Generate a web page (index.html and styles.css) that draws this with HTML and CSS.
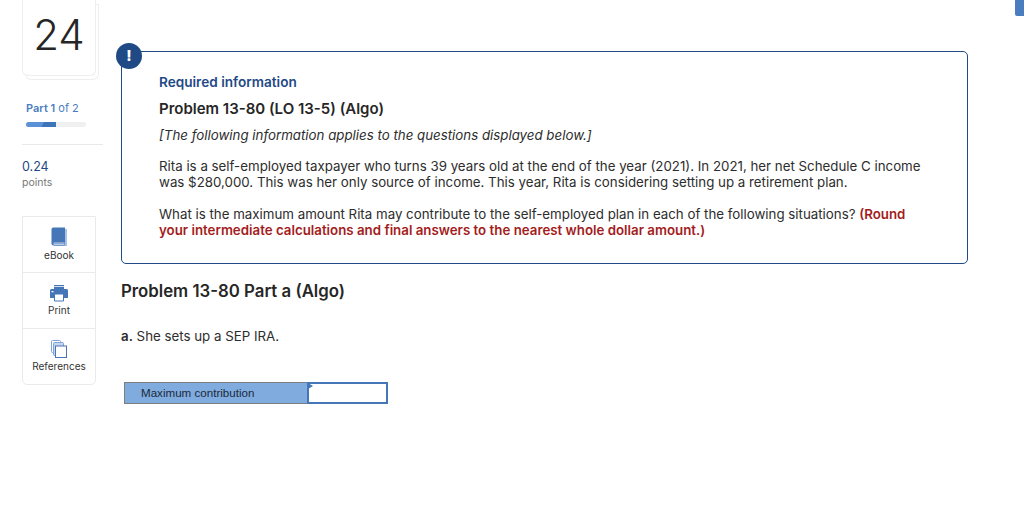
FILE: index.html
```html
<!DOCTYPE html>
<html lang="en">
<head>
  <meta charset="UTF-8" />
  <title>Problem 13-80 Part a (Algo)</title>
  <link rel="stylesheet" href="styles.css">
</head>
<body>
  <div class="corner-tab"></div>
  <div class="page">
    <aside class="sidebar">
      <div class="number-card"><div class="number">24</div></div>
      <div class="part-info">
        <div class="part-label"><b>Part 1</b> of 2</div>
        <div class="progress"><div class="progress-fill"></div></div>
      </div>
      <div class="points">
        <div class="points-value">0.24</div>
        <div class="points-label">points</div>
      </div>
      <div class="tools">
        <div class="tool">
          <svg width="20" height="24" viewBox="0 0 20 24">
            <path d="M5 5h13v17H5z" fill="#a9c3e6"/>
            <path d="M2.500 5.500C2.500 4.400 3.400 3.500 4.500 3.500H16V18.500H4.500C3.500 18.500 2.500 19 2.500 20z" fill="#4476b8"/>
            <path d="M2.500 19.500C2.500 18.500 3.500 18 4.500 18H16V21.500H4.500C3.400 21.500 2.500 20.600 2.500 19.500z" fill="#4476b8"/>
            <path d="M4.500 19H15.500M4.500 20.400H15.500" stroke="#fff" stroke-width=".7"/>
          </svg>
          <span>eBook</span>
        </div>
        <div class="tool">
          <svg width="20" height="20" viewBox="0 0 20 20">
            <path d="M5 2h10v1.300H5zM5 4h10v2H5z" fill="#4476b8"/>
            <path d="M1 7.500C1 6.700 1.700 6 2.500 6h15c.8 0 1.500.7 1.500 1.500V15H1z" fill="#4476b8"/>
            <path d="M2.500 8h2v1.300h-2z" fill="#fff"/>
            <path d="M5.500 11h9v7h-9z" fill="#fff" stroke="#4476b8" stroke-width="1"/>
          </svg>
          <span>Print</span>
        </div>
        <div class="tool">
          <svg width="20" height="20" viewBox="0 0 20 20">
            <rect x="2.500" y="1.500" width="9" height="12" rx="1" fill="#fff" stroke="#7fa3d6"/>
            <rect x="4.500" y="3.500" width="10" height="13" rx="1" fill="#c6d6ee" stroke="#7fa3d6"/>
            <rect x="6.500" y="7" width="11" height="11.500" fill="#fff" stroke="#4476b8"/>
          </svg>
          <span>References</span>
        </div>
      </div>
    </aside>

    <main class="content">
      <section class="notice">
        <div class="notice-badge">!</div>
        <h3 class="notice-title">Required information</h3>
        <h2 class="notice-problem">Problem 13-80 (LO 13-5) (Algo)</h2>
        <p class="notice-lead">[The following information applies to the questions displayed below.]</p>
        <p class="notice-text">Rita is a self-employed taxpayer who turns 39 years old at the end of the year (2021). In 2021, her net Schedule C income was $280,000. This was her only source of income. This year, Rita is considering setting up a retirement plan.</p>
        <p class="notice-text">What is the maximum amount Rita may contribute to the self-employed plan in each of the following situations? <strong class="warn">(Round your intermediate calculations and final answers to the nearest whole dollar amount.)</strong></p>
      </section>

      <h2 class="part-title">Problem 13-80 Part a (Algo)</h2>
      <p class="question"><b>a.</b> She sets up a SEP IRA.</p>

      <div class="answer-table">
        <div class="answer-label">Maximum contribution</div>
        <div class="answer-cell"></div>
      </div>
    </main>
  </div>
</body>
</html>
```

FILE: styles.css
```css
body {
  margin: 0;
  font-family: "Inter", "Open Sans", sans-serif;
  color: #2d2d2d;
  background: #fff;
}
.corner-tab {
  position: absolute;
  top: 0;
  right: 0;
  width: 9px;
  height: 16px;
  background: #4a7cc0;
  border-radius: 0 0 0 2px;
}
.page {
  display: flex;
  align-items: flex-start;
  padding-left: 22px;
}
.sidebar {
  width: 81px;
  flex: none;
}
.number-card {
  width: 74px;
  height: 76px;
  box-sizing: border-box;
  border: 1px solid #eee;
  border-top: 0;
  border-radius: 0 0 6px 6px;
  box-shadow: 3px 4px 0 -1px #fff, 3px 4px 0 0 #eee;
  display: flex;
  justify-content: center;
  padding-top: 13px;
}
.number {
  font-size: 42px;
  font-weight: 300;
  line-height: 44px;
  color: #262626;
}
.part-info {
  padding: 25px 0 17px 4px;
  border-bottom: 1px solid #e9e9e9;
}
.part-label {
  font-size: 11px;
  line-height: 14px;
  color: #4a7cc0;
}
.part-label b {
  font-weight: 600;
}
.progress {
  width: 60px;
  height: 5px;
  margin-top: 7px;
  background: #f0f0f0;
  border-radius: 3px;
  overflow: hidden;
}
.progress-fill {
  width: 30px;
  height: 100%;
  background: linear-gradient(115deg, #5b91d6 55%, #3e74b8 55%);
}
.points {
  padding-top: 14px;
}
.points-value {
  font-size: 12.500px;
  line-height: 16px;
  color: #1f4a85;
}
.points-label {
  font-size: 10.500px;
  line-height: 16px;
  color: #777;
}
.tools {
  width: 74px;
  box-sizing: border-box;
  margin-top: 25px;
  border: 1px solid #eaeaea;
  border-radius: 0 0 5px 5px;
}
.tool {
  height: 56px;
  box-sizing: border-box;
  display: flex;
  flex-direction: column;
  align-items: center;
  justify-content: flex-end;
  padding-bottom: 11px;
  font-size: 10px;
  line-height: 13px;
  color: #333;
}
.tool:first-child {
  height: 55px;
  padding-bottom: 10px;
}
.tool + .tool {
  border-top: 1px solid #eaeaea;
}
.tool svg {
  margin-bottom: 1px;
}
.content {
  width: 847px;
  margin: 51px 0 0 18px;
}
.notice {
  position: relative;
  height: 213px;
  box-sizing: border-box;
  padding: 22px 37px 0;
  border: 1px solid #1f4a85;
  border-radius: 5px;
}
.notice-badge {
  position: absolute;
  left: -6px;
  top: -9px;
  width: 26px;
  height: 26px;
  border-radius: 50%;
  background: #1f4a85;
  color: #fff;
  font-size: 15px;
  font-weight: 800;
  line-height: 26px;
  text-align: center;
}
.notice-title {
  margin: 0;
  font-size: 13.600px;
  line-height: 17px;
  font-weight: 600;
  color: #1f4a85;
}
.notice-problem {
  margin: 9px 0 0;
  font-size: 15px;
  line-height: 18px;
  font-weight: 600;
  color: #262626;
}
.notice-lead {
  margin: 8px 0 0;
  font-size: 13.300px;
  line-height: 18px;
  font-style: italic;
}
.notice-text {
  margin: 16px 0 0;
  font-size: 13.300px;
  line-height: 16px;
  width: 765px;
}
.notice-lead + .notice-text {
  margin-top: 14px;
}
.warn {
  font-weight: 600;
  color: #a31d1d;
}
.part-title {
  margin: 17px 0 0;
  font-size: 16.800px;
  line-height: 20px;
  font-weight: 600;
  color: #262626;
}
.question {
  margin: 26px 0 0;
  font-size: 13.300px;
  line-height: 18px;
}
.question b {
  font-weight: 600;
}
.answer-table {
  display: flex;
  width: 264px;
  height: 22px;
  margin: 37px 0 0 3px;
}
.answer-label {
  flex: 1;
  box-sizing: border-box;
  padding-left: 16px;
  background: #7fabdf;
  border: 1px solid #7d7d7d;
  border-right: 0;
  font-family: "Liberation Sans", sans-serif;
  font-size: 11.600px;
  line-height: 20px;
  color: #1c2a3a;
}
.answer-cell {
  position: relative;
  width: 81px;
  box-sizing: border-box;
  border: 2px solid #4476b8;
  background: #fff;
}
.answer-cell::before {
  content: "";
  position: absolute;
  left: -1px;
  top: -1px;
  border-left: 5px solid #4476b8;
  border-top: 3px solid transparent;
  border-bottom: 3px solid transparent;
}
```
